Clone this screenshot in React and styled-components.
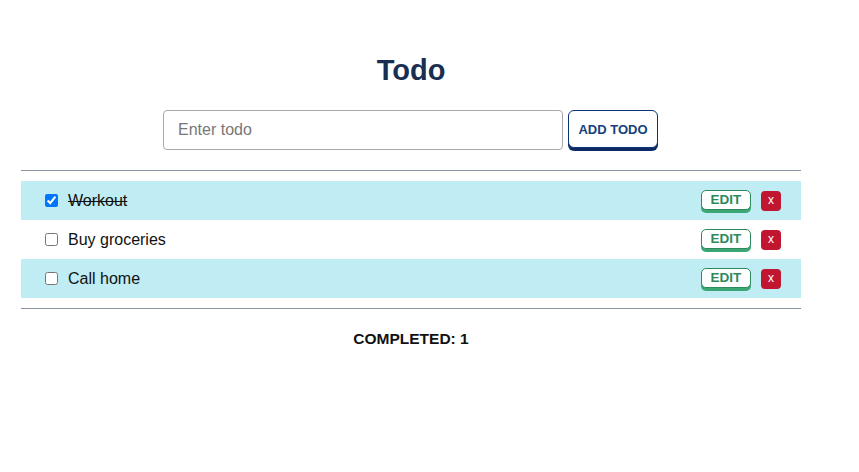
import styled, { createGlobalStyle } from 'styled-components';
import { useState } from 'react';

const GlobalStyle = createGlobalStyle`
  body {
    margin: 0;
    background: #fff;
    font-family: "Liberation Sans", Arial, sans-serif;
    color: #111;
  }
`;

const Page = styled.div`
  padding: 0 21px;
`;

const Container = styled.div`
  width: 780px;
`;

const Title = styled.h1`
  margin: 0;
  padding-top: 52px;
  text-align: center;
  font-size: 29px;
  line-height: 36px;
  font-weight: 700;
  color: #182f52;
`;

const Form = styled.form`
  display: flex;
  justify-content: center;
  align-items: flex-start;
  gap: 5px;
  margin-top: 22px;
  padding-right: 1px;
`;

const Input = styled.input`
  box-sizing: border-box;
  width: 400px;
  height: 40px;
  padding: 0 14px;
  border: 1px solid #a9a9a9;
  border-radius: 4px;
  font-family: "Liberation Sans", Arial, sans-serif;
  font-size: 16px;
  color: #222;
  &::placeholder {
    color: #777;
  }
`;

const AddButton = styled.button`
  box-sizing: border-box;
  width: 90px;
  height: 38px;
  background: #fff;
  border: 1px solid #0c3276;
  border-radius: 6px;
  box-shadow: 0 3px 0 #0c2a63;
  color: #163f7e;
  font-family: "Liberation Sans", Arial, sans-serif;
  font-weight: 700;
  font-size: 13px;
  padding: 0;
  cursor: pointer;
`;

const Divider = styled.hr`
  margin: ${(p) => p.$top}px 0 0;
  border: none;
  border-top: 1px solid #8b94a3;
`;

const List = styled.ul`
  list-style: none;
  margin: 10px 0 10px;
  padding: 0;
`;

const Row = styled.li`
  display: flex;
  align-items: center;
  height: 39px;
  padding: 0 20px 0 24px;
  background: ${(p) => (p.$shaded ? '#c0edf4' : '#fff')};
`;

const Check = styled.input`
  margin: 0 10px 0 0;
  width: 13px;
  height: 13px;
`;

const Label = styled.span`
  flex: 1;
  font-size: 16px;
  color: #111;
  text-decoration: ${(p) => (p.$done ? 'line-through' : 'none')};
`;

const EditButton = styled.button`
  box-sizing: border-box;
  width: 50px;
  height: 20px;
  margin-top: -2px;
  padding: 0;
  background: #fff;
  border: 1px solid #2e8a5e;
  border-radius: 5px;
  box-shadow: 0 3px 0 #3aa775;
  color: #2e8a5e;
  font-family: "Liberation Sans", Arial, sans-serif;
  font-weight: 700;
  font-size: 13.5px;
  cursor: pointer;
`;

const DeleteButton = styled.button`
  width: 20px;
  height: 20px;
  margin-left: 10px;
  padding: 0 0 2px;
  border: none;
  border-radius: 4px;
  background: #c0162f;
  color: #fff;
  font-family: "Liberation Sans", Arial, sans-serif;
  font-size: 12px;
  line-height: 16px;
  cursor: pointer;
`;

const Footer = styled.p`
  margin: 21px 0 0;
  text-align: center;
  font-size: 15.5px;
  line-height: 18px;
  font-weight: 700;
  color: #111;
`;

const initial = [
  { id: 1, text: 'Workout', done: true },
  { id: 2, text: 'Buy groceries', done: false },
  { id: 3, text: 'Call home', done: false },
];

export default function App() {
  const [todos, setTodos] = useState(initial);
  const [value, setValue] = useState('');

  const toggle = (id) =>
    setTodos(todos.map((t) => (t.id === id ? { ...t, done: !t.done } : t)));

  const remove = (id) => setTodos(todos.filter((t) => t.id !== id));

  const add = (e) => {
    e.preventDefault();
    if (!value.trim()) return;
    setTodos([...todos, { id: Date.now(), text: value, done: false }]);
    setValue('');
  };

  return (
    <>
      <GlobalStyle />
      <Page>
        <Container>
          <Title>Todo</Title>
          <Form onSubmit={add}>
            <Input
              placeholder="Enter todo"
              value={value}
              onChange={(e) => setValue(e.target.value)}
            />
            <AddButton type="submit">ADD TODO</AddButton>
          </Form>
          <Divider $top={20} />
          <List>
            {todos.map((t, i) => (
              <Row key={t.id} $shaded={i % 2 === 0}>
                <Check type="checkbox" checked={t.done} onChange={() => toggle(t.id)} />
                <Label $done={t.done}>{t.text}</Label>
                <EditButton>EDIT</EditButton>
                <DeleteButton onClick={() => remove(t.id)}>x</DeleteButton>
              </Row>
            ))}
          </List>
          <Divider $top={0} />
          <Footer>COMPLETED: {todos.filter((t) => t.done).length}</Footer>
        </Container>
      </Page>
    </>
  );
}
